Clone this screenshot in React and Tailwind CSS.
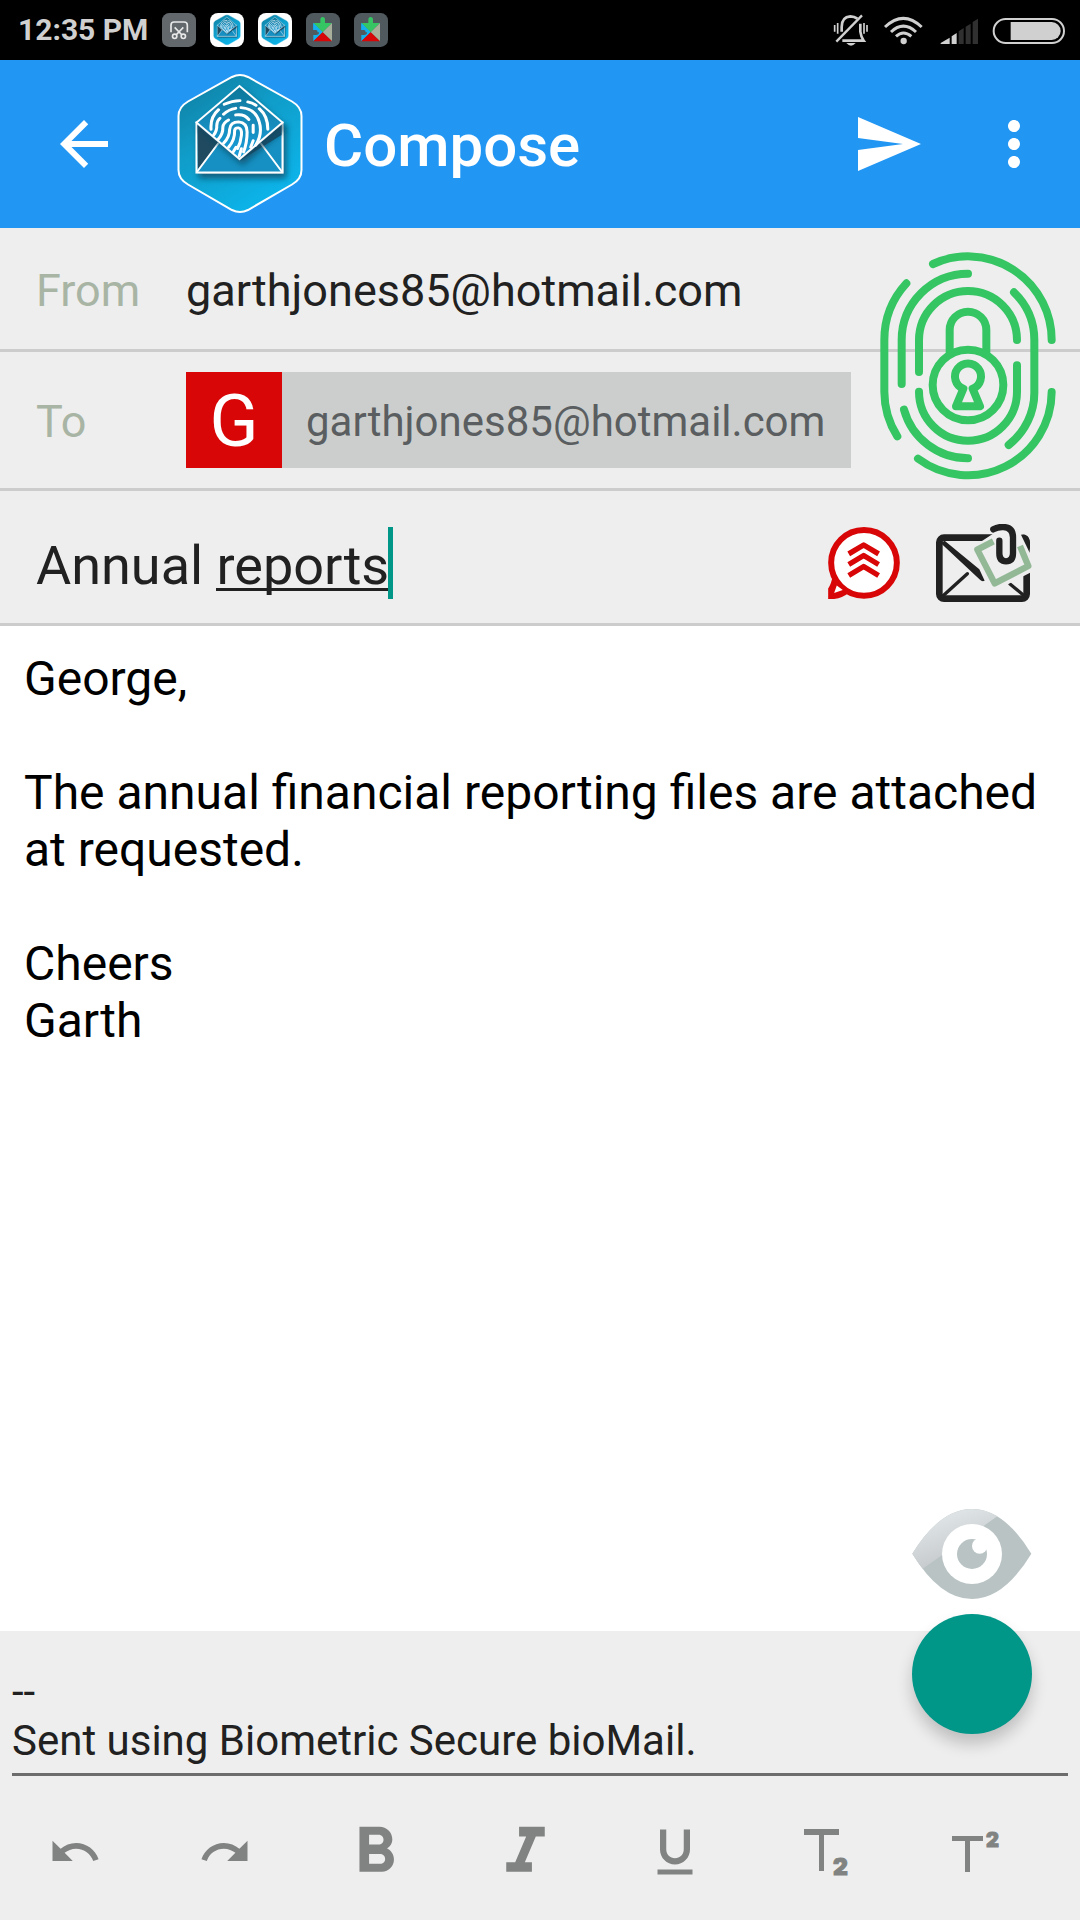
import React from "react";
import {
  MdArrowBack,
  MdSend,
  MdMoreVert,
  MdUndo,
  MdRedo,
  MdFormatBold,
  MdFormatItalic,
  MdFormatUnderlined,
} from "react-icons/md";

const BODY = `George,

The annual financial reporting files are attached at requested.

Cheers
Garth`;

const SIGNATURE = `--
Sent using Biometric Secure bioMail.`;

function BioMailLogo({ id, className }) {
  return (
    <svg viewBox="0 0 126 142" className={className} aria-hidden="true">
      <defs>
        <linearGradient id={id + "-bg"} x1="0" y1="0" x2="0.6" y2="1">
          <stop offset="0" stopColor="#107a9c" />
          <stop offset="0.45" stopColor="#109cc8" />
          <stop offset="1" stopColor="#0cb4ea" />
        </linearGradient>
        <linearGradient id={id + "-paper"} x1="0" y1="0" x2="0" y2="1">
          <stop offset="0" stopColor="#0e7699" />
          <stop offset="1" stopColor="#1c9fdc" />
        </linearGradient>
        <filter id={id + "-shadow"} x="-20%" y="-20%" width="150%" height="150%">
          <feDropShadow dx="3" dy="5" stdDeviation="3" floodColor="#0a4660" floodOpacity="0.75" />
        </filter>
      </defs>
      <path
        d="M55 4Q63 0 71 4L115 28.500Q124.500 34 124.500 43V97Q124.500 106 115 111.500L71 137Q63 141 55 137L11 111.500Q1.500 106 1.500 97V43Q1.500 34 11 28.500Z"
        fill={`url(#${id}-bg)`}
        stroke="#fff"
        strokeWidth="2"
      />
      <g filter={`url(#${id}-shadow)`}>
        <path d="M19.500 49.500H105.500V99.500H19.500Z" fill="#1590c2" stroke="#fff" strokeWidth="2" />
      </g>
      <path d="M20.500 52L41 69.500L21 97Z" fill="#1f4a60" />
      <path d="M104.500 52L84 69.500L62.500 88L104.500 62Z" fill="#17506e" />
      <path d="M41.500 70L19.500 99.500M83.500 70L105.500 99.500" stroke="#fff" strokeWidth="2" />
      <g filter={`url(#${id}-shadow)`}>
        <path d="M62.500 13L105.500 49.500L62.500 86L19.500 49.500Z" fill={`url(#${id}-paper)`} stroke="#fff" strokeWidth="1.800" />
      </g>
      <g
        transform="scale(.357 .333) translate(-383.600 -39)"
        fill="none"
        stroke="#fff"
        strokeWidth="8.500"
        strokeLinecap="round"
      >
        <path d="M516 133Q538 122 560 122M582 126Q596 129 605 136" />
        <path d="M479 208Q476 172 500 149M514 163Q528 148 548 145M563 143Q604 146 614 186Q624 222 604 256M614 146Q638 168 638 208" />
        <path d="M486 226Q496 212 495 196Q496 182 504 175M548 165Q572 161 585 179M597 196V218M597 242L590 262" />
        <path d="M499 238Q513 222 512 202Q513 188 528 180M514 250Q531 232 531 208Q533 186 556 186Q580 188 580 216Q580 248 570 276" />
        <path d="M528 262Q546 240 545 212Q546 203 556 204Q566 206 564 226Q562 248 553 266M541 276L549 262M558 288L564 266" />
      </g>
    </svg>
  );
}

function ScissorsIcon() {
  return (
    <svg viewBox="0 0 102 102" className="h-[34px] w-[34px]" aria-hidden="true">
      <rect width="102" height="102" rx="22" fill="#62686c" />
      <g fill="none" stroke="#e8e8e8" strokeWidth="5">
        <path d="M27 58V36Q27 27 36 27H66Q76 27 76 36V58" />
        <path d="M38 43L60 66M64 43L42 66" />
        <circle cx="38" cy="70" r="6.500" />
        <circle cx="64" cy="70" r="6.500" />
      </g>
    </svg>
  );
}

function PuzzleIcon() {
  return (
    <svg viewBox="0 0 102 102" className="h-[34px] w-[34px]" aria-hidden="true">
      <rect width="102" height="102" rx="22" fill="#50595e" />
      <path d="M22 30L50 58L22 85V66H30Q39 66 39 58Q39 51 30 51H22Z" fill="#14b0ee" />
      <path d="M22 30H43V20Q43 12 50 12Q57 12 57 20V30H78L50 58Z" fill="#35c563" />
      <path d="M22 30L50 58L34 58Q36 51 30 51H22Z" fill="#14b0ee" />
      <path d="M78 30V85L50 58Z" fill="#a8b09c" />
      <path d="M22 85L50 58L78 85Z" fill="#d80606" />
    </svg>
  );
}

function LogoTile({ id }) {
  return (
    <span className="flex h-[34px] w-[34px] items-center justify-center rounded-lg bg-white">
      <BioMailLogo id={id} className="h-8 w-7" />
    </span>
  );
}

function StatusBar() {
  return (
    <div className="flex h-[60px] items-center justify-between bg-black pr-[15px] pl-[18px] text-[#d0d0d0]">
      <div className="flex items-center gap-[14px]">
        <span className="text-[30px] leading-none font-bold">12:35 PM</span>
        <ScissorsIcon />
        <LogoTile id="tile-a" />
        <LogoTile id="tile-b" />
        <PuzzleIcon />
        <PuzzleIcon />
      </div>
      <svg viewBox="100 36 696 102" className="h-[34px] w-[232px]" role="img" aria-label="Muted, Wi-Fi, signal, battery">
        <g fill="none" stroke="#d0d0d0">
          <path d="M105 72V92M114 66V98M193 66V98M202 72V92" strokeWidth="5" />
          <path d="M126 92V78Q126 48 152 46Q164 46 173 53M182 68V92Q184 108 192 119H128" strokeWidth="8" />
          <path d="M187 43L110 122" strokeWidth="7" />
          <path d="M256 78Q311 26 366 78M274 93Q311 58 349 93M289 106Q311 86 335 106" strokeWidth="9" />
          <rect x="582" y="54" width="211" height="72" rx="36" strokeWidth="6" />
        </g>
        <path d="M140 126H168Q154 142 140 126Z" fill="#d0d0d0" />
        <circle cx="312" cy="120" r="9.500" fill="#d0d0d0" />
        <path d="M423 129V126L450 110V129ZM456 129V106L471 96V129Z" fill="#d0d0d0" />
        <path d="M477 129V91L492 81V129ZM498 129V77L513 68V129ZM519 129V63L535 53V129Z" fill="#303030" />
        <path d="M633 63H756A27 27 0 0 1 756 117H633Z" fill="#d0d0d0" />
      </svg>
    </div>
  );
}

function AppBar() {
  return (
    <header className="flex h-[168px] items-center bg-[#2196f3] pr-[30px] pl-12 text-white">
      <button type="button" aria-label="Back">
        <MdArrowBack size={72} />
      </button>
      <BioMailLogo id="brand" className="ml-[57px] h-[142px] w-[126px]" />
      <h1 className="ml-[21px] pt-1 text-[60px] leading-none font-medium">Compose</h1>
      <button type="button" aria-label="Send" className="ml-auto">
        <MdSend size={72} />
      </button>
      <button type="button" aria-label="More options" className="ml-[54px]">
        <MdMoreVert size={72} />
      </button>
    </header>
  );
}

function FingerprintLock() {
  return (
    <svg viewBox="0 0 600 750" className="h-[250px] w-[200px]" fill="none" stroke="#35c563" strokeWidth="24" strokeLinecap="round" aria-hidden="true">
      <path d="M189 72A251 251 0 0 1 545 300" />
      <path d="M109 130A251 251 0 0 0 43 300V455A251 251 0 0 0 82 589" />
      <path d="M144 656A251 251 0 0 0 545 456" />
      <path d="M294 101A199 199 0 0 0 95 300V432" />
      <path d="M432 157A199 199 0 0 1 493 300V455A199 199 0 0 1 416 615" />
      <path d="M102 509A199 199 0 0 0 294 655" />
      <path d="M147 396V300A147 147 0 0 1 441 300" />
      <path d="M441 376V455A147 147 0 0 1 147 455" />
      <path d="M239 335V270A55 55 0 0 1 349 270V335" />
      <circle cx="294" cy="435" r="106" />
      <path d="M280 446A39 39 0 1 1 308 446L330 499H258Z" strokeLinejoin="round" />
    </svg>
  );
}

function UrgentIcon() {
  return (
    <svg viewBox="54 50 216 217" className="h-[72px] w-[72px]" aria-hidden="true">
      <path d="M54 267V235Q64 222 68 195L120 245Q98 264 72 267Z" fill="#d80606" />
      <circle cx="162" cy="158" r="99" fill="#fff" stroke="#d80606" strokeWidth="18" />
      <path d="M80 226L98 240L72 249Z" fill="#fff" />
      <path d="M116 131L161 104L206 131M116 163L161 136L206 163M116 196L161 169L206 196" fill="none" stroke="#d80606" strokeWidth="16" strokeLinejoin="round" />
    </svg>
  );
}

function AttachIcon() {
  return (
    <svg viewBox="378 42 288 234" className="h-[78px] w-[96px]" aria-hidden="true">
      <rect x="388" y="83" width="262" height="183" rx="14" fill="none" stroke="#212121" strokeWidth="20" />
      <path d="M392 99L404 92L508 178L524 212Q516 216 510 209Z" fill="#212121" />
      <path d="M396 260L472 191M600 222L646 260" stroke="#212121" strokeWidth="10" strokeLinecap="round" />
      <path d="M478 118L548 72L548 36L634 60L672 150V182L556 242Z" fill="#eee" />
      <path d="M633 74Q656 72 659 92V128Z" fill="#212121" />
      <path d="M550 94L502 119L554 220L655 168L630 108" fill="none" stroke="#92b896" strokeWidth="19" strokeLinejoin="round" />
      <path d="M550 58Q564 50 580 51Q609 52 609 82V130Q609 154 588 154Q568 154 568 130V92" fill="none" stroke="#212121" strokeWidth="19" strokeLinecap="round" />
    </svg>
  );
}

function EyeIcon() {
  return (
    <svg viewBox="66 57 360 270" className="h-[90px] w-[120px]" aria-hidden="true">
      <defs>
        <linearGradient id="eye-shine" x1="0.3" y1="0.2" x2="0.6" y2="0.8">
          <stop offset="0" stopColor="#dde2e4" />
          <stop offset="1" stopColor="#c6cacc" />
        </linearGradient>
      </defs>
      <path d="M67 191Q150 57 246 57Q342 57 424 191Q342 327 246 327Q150 327 67 191Z" fill="#b9c3c4" />
      <path d="M67 191Q150 57 246 57Q286 57 322 79L98 236Q82 216 67 191Z" fill="url(#eye-shine)" />
      <circle cx="246" cy="192" r="90" fill="#fff" />
      <circle cx="246" cy="192" r="45" fill="#b9c3c4" />
      <circle cx="269" cy="168" r="23" fill="#fff" />
      <path d="M254 142L300 142L296 180L280 160Z" fill="#fff" />
    </svg>
  );
}

function SubscriptIcon() {
  return (
    <svg viewBox="0 0 60 60" className="h-[60px] w-[60px]" fill="currentColor" aria-hidden="true">
      <rect x="9" y="7" width="35" height="6" />
      <rect x="24" y="12" width="5" height="37" />
      <text x="38" y="53" fontFamily="Inter, sans-serif" fontWeight="900" fontSize="23" stroke="currentColor" strokeWidth="1">2</text>
    </svg>
  );
}

function SuperscriptIcon() {
  return (
    <svg viewBox="0 0 60 60" className="h-[60px] w-[60px]" fill="currentColor" aria-hidden="true">
      <rect x="7" y="14" width="31" height="5" />
      <rect x="20" y="18" width="5" height="32" />
      <text x="41" y="25" fontFamily="Inter, sans-serif" fontWeight="900" fontSize="20" stroke="currentColor" strokeWidth="1">2</text>
    </svg>
  );
}

const TOOLS = [
  { label: "Undo", icon: <MdUndo size={54} /> },
  { label: "Redo", icon: <MdRedo size={54} /> },
  { label: "Bold", icon: <MdFormatBold size={77} /> },
  { label: "Italic", icon: <MdFormatItalic size={77} /> },
  { label: "Underline", icon: <MdFormatUnderlined size={60} /> },
  { label: "Subscript", icon: <SubscriptIcon /> },
  { label: "Superscript", icon: <SuperscriptIcon /> },
];

export default function App() {
  return (
    <div className="flex min-h-screen flex-col bg-white font-['Roboto',sans-serif]">
      <StatusBar />
      <AppBar />

      <main className="flex flex-1 flex-col">
        <div className="relative bg-[#eeeeee]">
          <div className="flex h-[124px] items-center border-b-3 border-[#cccccc] pt-1 pr-[240px] pl-9 text-[45px]">
            <label htmlFor="from" className="w-[150px] shrink-0 text-[#a8b4a4]">From</label>
            <input id="from" type="email" defaultValue="garthjones85@hotmail.com" className="min-w-0 flex-1 bg-transparent text-[#212121] outline-none" />
          </div>
          <div className="flex h-[139px] items-center border-b-3 border-[#cccccc] pr-[229px] pl-9">
            <label htmlFor="to" className="w-[150px] shrink-0 pt-1 text-[45px] text-[#a8b4a4]">To</label>
            <button type="button" className="flex h-24 shrink-0 items-center bg-[#cccecd] pr-[26px] text-[42px] text-[#5a5e60]">
              <span className="mr-6 flex h-24 w-24 items-center justify-center bg-[#d80606] pt-1 text-[72px] leading-none text-white">G</span>
              <span className="pt-0.5">garthjones85@hotmail.com</span>
            </button>
            <input id="to" type="email" className="w-0 min-w-0 flex-1 bg-transparent outline-none" />
          </div>
          <button type="button" aria-label="Biometric encryption" className="absolute top-3 right-[10px]">
            <FingerprintLock />
          </button>
        </div>

        <div className="flex h-[135px] items-center border-b-3 border-[#cccccc] bg-[#eeeeee] pt-3 pr-12 pl-9">
          <div className="relative h-[72px] flex-1">
            <input aria-label="Subject" defaultValue="Annual reports" className="block h-[72px] w-full bg-transparent pt-1 text-[54px] text-[#212121] outline-none" />
            <span className="pointer-events-none absolute bottom-2 left-[180px] h-[3px] w-[173px] bg-[#212121]" />
            <span className="pointer-events-none absolute top-0 left-[352px] h-[72px] w-[5px] bg-[#009688]" />
          </div>
          <button type="button" aria-label="Mark as urgent" className="mr-9">
            <UrgentIcon />
          </button>
          <button type="button" aria-label="Attach file">
            <AttachIcon />
          </button>
        </div>

        <textarea
          aria-label="Message"
          defaultValue={BODY}
          className="block w-full flex-1 resize-none bg-white px-6 pt-6 text-[48px] leading-[57px] text-black outline-none"
        />
      </main>

      <footer className="relative bg-[#eeeeee]">
        <div className="px-3 pt-9">
          <textarea
            aria-label="Signature"
            defaultValue={SIGNATURE}
            rows={2}
            className="block w-full resize-none border-b-3 border-[#6c6c6c] bg-transparent pb-2 text-[42px] leading-[49px] text-[#212121] outline-none"
          />
        </div>
        <div className="grid h-[144px] grid-cols-7 pt-2 pr-[30px] text-[#808381]">
          {TOOLS.map((tool) => (
            <button key={tool.label} type="button" aria-label={tool.label} className="flex items-center justify-center">
              {tool.icon}
            </button>
          ))}
        </div>
        <div className="absolute right-12 bottom-[186px] flex flex-col gap-[15px]">
          <button type="button" aria-label="Preview">
            <EyeIcon />
          </button>
          <button type="button" aria-label="New action" className="h-[120px] w-[120px] rounded-full bg-[#009688] shadow-[0_10px_16px_rgba(0,0,0,0.2)]" />
        </div>
      </footer>
    </div>
  );
}
